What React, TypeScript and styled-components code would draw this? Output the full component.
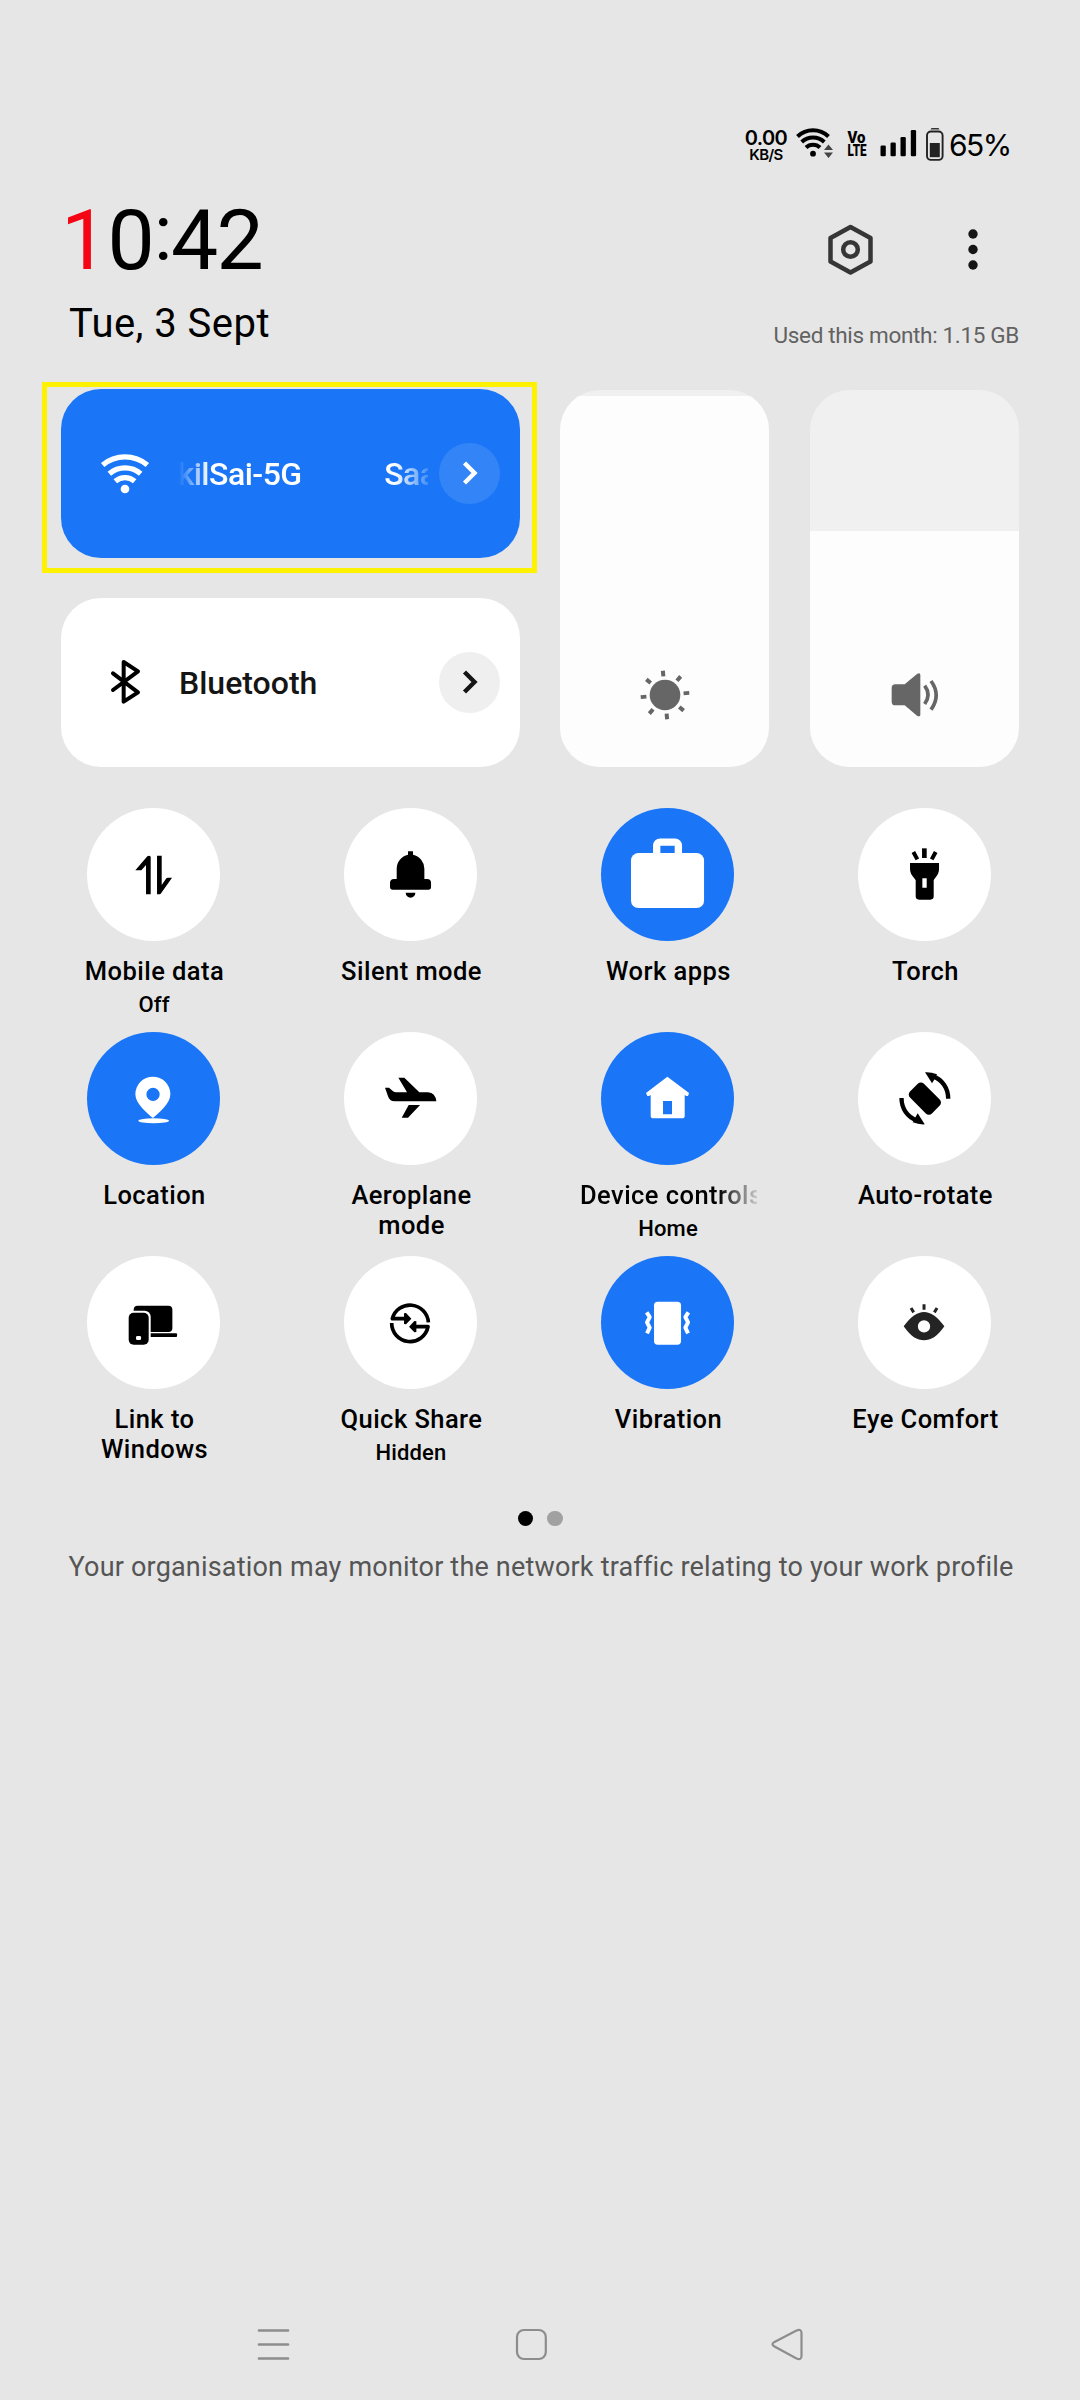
import React from "react";
import styled, { createGlobalStyle, css } from "styled-components";

const BLUE = "#1a76f7";

const GlobalStyle = createGlobalStyle`
  * { box-sizing: border-box; }
  body { margin: 0; background: #e6e6e6; }
`;

const Screen = styled.main`
  width: 1080px;
  height: 2400px;
  display: flex;
  flex-direction: column;
  background: #e6e6e6;
  color: #000;
  font-family: Roboto, "Liberation Sans", sans-serif;
  overflow: hidden;
`;

const Icon = styled.svg`
  display: block;
  flex: none;
`;

/* ---------- status bar ---------- */

const StatusBar = styled.header`
  display: flex;
  justify-content: flex-end;
  height: 166px;
  padding: 122px 70px 0 0;
  font-family: Inter, Roboto, sans-serif;
`;

const Speed = styled.div`
  width: 44px;
  margin-right: 8px;
  padding-top: 6px;
  display: flex;
  flex-direction: column;
  align-items: center;
  font-weight: 600;
  white-space: nowrap;
`;

const SpeedValue = styled.span`
  font-size: 20px;
  line-height: 20px;
  letter-spacing: -0.6px;
`;

const SpeedUnit = styled.span`
  font-size: 15px;
  line-height: 14px;
  letter-spacing: -0.6px;
`;

const StatusIcon = styled(Icon)<{ $gap: number }>`
  margin-right: ${(p) => p.$gap}px;
`;

const BatteryText = styled.span`
  width: 61px;
  padding-top: 5px;
  font-size: 30px;
  line-height: 36px;
  letter-spacing: -1.5px;
  white-space: nowrap;
`;

/* ---------- clock header ---------- */

const Header = styled.section`
  display: flex;
  justify-content: space-between;
  height: 223px;
  padding: 0 61px 0 61px;
`;

const ClockBlock = styled.div`
  padding-top: 33px;
`;

const Clock = styled.div`
  height: 84px;
  font-size: 84px;
  line-height: 84px;
  letter-spacing: -0.7px;
  white-space: nowrap;
`;

const RedDigit = styled.span`
  color: #f50514;
`;

const Colon = styled.span`
  display: inline-block;
  width: 17px;
  font-size: 76px;
  line-height: 60px;
  vertical-align: 10px;
`;

const Minutes = styled.span`
  letter-spacing: -1.8px;
`;

const DateLine = styled.div`
  margin: 17px 0 0 8px;
  font-size: 40px;
  line-height: 48px;
  letter-spacing: 0.45px;
  white-space: nowrap;
`;

const HeaderRight = styled.div`
  display: flex;
  flex-direction: column;
  align-items: flex-end;
`;

const Actions = styled.div`
  display: flex;
  justify-content: space-between;
  width: 192px;
  height: 54px;
  margin: 56px 1.5px 0 0;
`;

const Usage = styled.div`
  margin-top: 45px;
  font-size: 22.5px;
  line-height: 28px;
  letter-spacing: -0.33px;
  font-weight: 430;
  color: #626262;
  white-space: nowrap;
`;

/* ---------- large tiles and sliders ---------- */

const Controls = styled.section`
  display: flex;
  height: 378.5px;
  padding: 0 61px 0 61px;
`;

const WideTiles = styled.div`
  width: 459px;
  margin-right: 40px;
  display: flex;
  flex-direction: column;
  gap: 40.5px;
`;

const WideTile = styled.div<{ $on?: boolean }>`
  position: relative;
  display: flex;
  align-items: center;
  height: 168.5px;
  padding: 0 20px 0 38px;
  border-radius: 40px;
  background: ${(p) => (p.$on ? BLUE : "#fff")};
  color: ${(p) => (p.$on ? "#fff" : "#151515")};
`;

const Highlight = styled.div`
  position: absolute;
  left: -19px;
  top: -7px;
  width: 495px;
  height: 191px;
  border: 5px solid #fff200;
`;

const WideLabel = styled.div<{ $fade?: boolean }>`
  width: 252px;
  margin-left: 28px;
  margin-right: 11px;
  padding-top: 1px;
  display: flex;
  gap: 84px;
  overflow: hidden;
  font-size: 32px;
  line-height: 44px;
  font-weight: 460;
  white-space: nowrap;
  ${(p) =>
    p.$fade &&
    css`
      letter-spacing: -0.5px;
      text-indent: -1.5px;
      mask-image: linear-gradient(to right, transparent 0, #000 30px, #000 216px, transparent 256px);
    `}
`;

const More = styled.div<{ $on?: boolean }>`
  flex: none;
  display: grid;
  place-items: center;
  width: 61px;
  height: 61px;
  border-radius: 50%;
  background: ${(p) => (p.$on ? "rgba(255,255,255,0.11)" : "#efefef")};
`;

const Slider = styled.div`
  width: 208.5px;
  height: 376.5px;
  margin-top: 1px;
  display: flex;
  flex-direction: column;
  justify-content: flex-end;
  border-radius: 40px;
  overflow: hidden;
  background: #f0f0f0;

  & + & {
    margin-left: 41.5px;
  }
`;

const SliderFill = styled.div<{ $height: number }>`
  height: ${(p) => p.$height}px;
  display: flex;
  align-items: flex-end;
  justify-content: center;
  padding: 0 0 45.5px 1px;
  background: #fdfdfd;
  color: #666;
`;

/* ---------- toggle grid ---------- */

const Grid = styled.section`
  display: grid;
  grid-template-columns: repeat(4, 257px);
  grid-auto-rows: 224px;
  margin: 40px 0 0 25px;
  height: 672px;
`;

const Toggle = styled.div`
  display: flex;
  flex-direction: column;
  align-items: center;
`;

const Disc = styled.div<{ $on?: boolean }>`
  width: 133.4px;
  height: 133.4px;
  border-radius: 50%;
  background: ${(p) => (p.$on ? BLUE : "#fff")};
  color: ${(p) => (p.$on ? "#fff" : "#000")};
`;

const Name = styled.div<{ $clip?: boolean }>`
  width: 177px;
  margin: 15px 0 0 2px;
  font-size: 25.5px;
  line-height: 30px;
  font-weight: 460;
  letter-spacing: 0.45px;
  text-align: center;
  ${(p) =>
    p.$clip &&
    css`
      text-align: left;
      white-space: nowrap;
      overflow: hidden;
      mask-image: linear-gradient(to right, #000 138px, transparent 182px);
    `}
`;

const State = styled.div`
  margin: 4.7px 0 0 1px;
  font-size: 22px;
  line-height: 28px;
  font-weight: 460;
  letter-spacing: 0.15px;
`;

/* ---------- footer ---------- */

const Pager = styled.div`
  display: flex;
  justify-content: center;
  gap: 14px;
  margin-top: 31px;
`;

const PageDot = styled.span<{ $active?: boolean }>`
  width: 15.5px;
  height: 15.5px;
  border-radius: 50%;
  background: ${(p) => (p.$active ? "#000" : "#a1a1a1")};
`;

const Notice = styled.p`
  margin: 25px 0 0 2px;
  font-size: 27px;
  line-height: 32px;
  letter-spacing: 0.19px;
  text-align: center;
  color: #555;
  white-space: nowrap;
`;

const NavBar = styled.nav`
  display: flex;
  justify-content: space-between;
  margin-top: auto;
  padding: 0 275px 38px 256px;
`;

/* ---------- glyphs ---------- */

const TileIcon = ({ children }: { children: React.ReactNode }) => (
  <Icon width="133.4" height="133.4" viewBox="0 0 400 400" fill="currentColor">
    {children}
  </Icon>
);

const Chevron = () => (
  <Icon width="20" height="28" viewBox="0 0 20 28" fill="none" stroke="currentColor" strokeWidth="4.4">
    <path d="M4.500 4l10 10-10 10" />
  </Icon>
);

const MobileDataIcon = () => (
  <TileIcon>
    <path d="M145 187l36-42q2-2 5-2t5 3v113h-14v-88l-14 16zM210 143h14v88l14-20q2-2 4-2h13l-34 48q-2 2-5 2h-6z" />
  </TileIcon>
);

const BellIcon = () => (
  <TileIcon>
    <path d="M192 130h15v10a43 43 0 0 1 34 42v31h8q12 0 12 12v12q0 8-8 8H146q-8 0-8-8v-12q0-12 12-12h8v-31a43 43 0 0 1 34-42zM185 254h29a14.5 15 0 0 1-29 0z" />
  </TileIcon>
);

const BriefcaseIcon = () => (
  <TileIcon>
    <rect x="90" y="135" width="219" height="165" rx="22" />
    <rect x="167" y="102.5" width="65" height="50" rx="10" fill="none" stroke="currentColor" strokeWidth="22" />
  </TileIcon>
);

const TorchIcon = () => (
  <TileIcon>
    <path d="M192 121h14v29h-14z" />
    <path d="M166 132l12 22M233 132l-12 22" stroke="currentColor" strokeWidth="12" />
    <path
      fillRule="evenodd"
      d="M156 165h87v18c0 17-12 26-16 34v48q0 10-10 10h-34q-10 0-10-10v-48c-4-8-17-17-17-34zM193 211v28h13v-28z"
    />
  </TileIcon>
);

const PinIcon = () => (
  <TileIcon>
    <path
      fillRule="evenodd"
      d="M197.500 258C180 243 145 214 145 186.500a52.500 52.500 0 0 1 105 0C250 214 215 243 197.500 258zM198 167a20 20 0 1 0 0 40a20 20 0 1 0 0-40z"
    />
    <ellipse cx="200" cy="266" rx="46" ry="7.500" />
  </TileIcon>
);

const PlaneIcon = () => (
  <TileIcon>
    <path d="M123 167h12l12 11q4 3 9 3h33l-26-44h18l45 44h26q22 2 25 27H152q-16 0-20-15zM194 219h34l-36 38h-19z" />
  </TileIcon>
);

const HomeIcon = () => (
  <TileIcon>
    <path
      fillRule="evenodd"
      d="M199 134l65 49-3 9h-5l-5-3v62q0 8-8 8h-86q-8 0-8-8v-62l-5 3h-5l-4-9zM186 207v40h27v-40z"
    />
  </TileIcon>
);

const RotateIcon = () => (
  <TileIcon>
    <rect x="154" y="170" width="93" height="59" rx="13" transform="rotate(45 200.500 199.500)" />
    {[0, 180].map((angle) => (
      <g key={angle} transform={`rotate(${angle} 200.500 199)`}>
        <path d="M270.500 200c0-32-18-58-46-67" fill="none" stroke="currentColor" strokeWidth="13" />
        <path d="M201 121q18-1 36 6l-9 17-6 10z" />
      </g>
    ))}
  </TileIcon>
);

const LinkIcon = () => (
  <TileIcon>
    <rect x="140" y="149" width="116" height="79" rx="12" />
    <path d="M185 232h82q3 0 3 3v5q0 3-3 3h-82z" />
    <rect x="119" y="164" width="72" height="108" rx="18" fill="#fff" />
    <rect x="125" y="170" width="60" height="96" rx="15" />
    <rect x="147" y="240" width="15" height="12" rx="4" fill="#fff" />
  </TileIcon>
);

const QuickShareIcon = () => (
  <TileIcon>
    <g fill="none" stroke="currentColor" strokeWidth="11">
      <path d="M186 188h-41a55 55 0 0 1 108 11" strokeLinejoin="round" />
      <path d="M210 212h42a55 55 0 0 1-109-11" strokeLinejoin="round" />
    </g>
    <path d="M180 172l6-1 16 17-16 17-6-1zM217 196l-6-1-16 17 16 17 6-1z" />
  </TileIcon>
);

const VibrationIcon = () => (
  <TileIcon>
    <rect x="159" y="137" width="81" height="129" rx="11" />
    <g fill="none" stroke="currentColor" strokeWidth="12" strokeLinejoin="round">
      <path d="M137 169l9 14-8 16 8 16-8 17" />
      <path d="M262 169l-9 14 8 16-8 16 8 17" />
    </g>
  </TileIcon>
);

const EyeIcon = () => (
  <TileIcon>
    <g fill="#242424" stroke="#242424">
      <path
        stroke="none"
        fillRule="evenodd"
        d="M137 211C158 182 178 168 198 168S238 182 259 211C238 242 218 253 198 253S158 242 137 211zM198 192.500a18.500 18.500 0 1 0 0 37a18.500 18.500 0 1 0 0-37z"
      />
      <path d="M198 145v16M159 156l8 13M237 156l-8 13" strokeWidth="9" />
    </g>
  </TileIcon>
);

const WifiTileIcon = () => (
  <Icon width="52" height="48" viewBox="0 0 156 144" fill="none" stroke="currentColor" strokeWidth="16">
    <path d="M11 48a104 104 0 0 1 134 0" />
    <path d="M31 74a72 72 0 0 1 94 0" />
    <path d="M49 97a44 44 0 0 1 58 0" />
    <circle cx="78" cy="120" r="13" fill="currentColor" stroke="none" />
  </Icon>
);

const BluetoothIcon = () => (
  <Icon width="52" height="48" viewBox="0 0 156 144" fill="none" stroke="#000" strokeWidth="12" strokeLinejoin="round" strokeLinecap="round">
    <path d="M42 46l75 57-43 28V12l43 28-75 56" />
  </Icon>
);

const SunIcon = () => (
  <Icon width="52" height="52" viewBox="-78 -78 156 156" fill="currentColor">
    <circle r="46" />
    <g transform="rotate(-5)">
      {[0, 45, 90, 135, 180, 225, 270, 315].map((a) => (
        <rect key={a} x="-6" y="-73" width="12" height="17" transform={`rotate(${a})`} />
      ))}
    </g>
  </Icon>
);

const VolumeIcon = () => (
  <Icon width="52" height="52" viewBox="-2 0 156 156" fill="currentColor">
    <path d="M6 57q0-11 11-11h28l37-31q10-5 10 3v119q0 8-10 3l-37-31H17q-11 0-11-11z" />
    <g fill="none" stroke="currentColor" strokeWidth="11">
      <path d="M105 50q20 27 0 55" />
      <path d="M124 36q31 42 0 86" />
    </g>
  </Icon>
);

const toggles = [
  { name: "Mobile data", state: "Off", icon: <MobileDataIcon /> },
  { name: "Silent mode", icon: <BellIcon /> },
  { name: "Work apps", icon: <BriefcaseIcon />, on: true },
  { name: "Torch", icon: <TorchIcon /> },
  { name: "Location", icon: <PinIcon />, on: true },
  { name: "Aeroplane mode", icon: <PlaneIcon /> },
  { name: "Device controls", state: "Home", icon: <HomeIcon />, on: true, clip: true },
  { name: "Auto-rotate", icon: <RotateIcon /> },
  { name: "Link to Windows", icon: <LinkIcon /> },
  { name: "Quick Share", state: "Hidden", icon: <QuickShareIcon /> },
  { name: "Vibration", icon: <VibrationIcon />, on: true },
  { name: "Eye Comfort", icon: <EyeIcon /> },
];

export default function App() {
  return (
    <Screen>
      <GlobalStyle />
      <StatusBar>
        <Speed>
          <SpeedValue>0.00</SpeedValue>
          <SpeedUnit>KB/S</SpeedUnit>
        </Speed>
        <StatusIcon $gap={12} width="38" height="44" viewBox="0 0 38 44">
          <g fill="none" stroke="#000" strokeWidth="4">
            <path d="M1.500 14.500a22.500 22.500 0 0 1 31 0" />
            <path d="M5.700 20a16.500 16.500 0 0 1 22.600 0" />
            <path d="M10 25.500a10 10 0 0 1 14 0" />
          </g>
          <circle cx="17" cy="31.700" r="2.900" />
          <path d="M28 28l4.500-5.500L37 28zM28 30.500h9L32.500 36z" fill="#444" />
        </StatusIcon>
        <StatusIcon $gap={13} width="21" height="44" viewBox="0 0 21 44" fontFamily="Roboto" fontWeight="900">
          <text x="1.500" y="21" fontSize="16.500" textLength="18" lengthAdjust="spacingAndGlyphs">Vo</text>
          <text x="1.500" y="34.300" fontSize="16.500" textLength="19" lengthAdjust="spacingAndGlyphs">LTE</text>
        </StatusIcon>
        <StatusIcon $gap={8} width="37" height="44" viewBox="0 0 37 44">
          <rect x="0.500" y="23.500" width="5.300" height="10.800" rx="1.300" />
          <rect x="10.500" y="20.500" width="5.300" height="13.800" rx="1.300" />
          <rect x="20.500" y="15" width="5.300" height="19.300" rx="1.300" />
          <rect x="30.800" y="8" width="5.300" height="26.300" rx="1.300" />
        </StatusIcon>
        <StatusIcon $gap={4} width="20" height="44" viewBox="0 0 20 44">
          <path d="M5.500 7.500l1-1.500h7l1 1.500z" fill="#333" />
          <rect x="2" y="9.500" width="15.600" height="28.400" rx="4" fill="none" stroke="#222" strokeWidth="1.900" />
          <rect x="4.800" y="21" width="10" height="14.200" fill="#222" />
        </StatusIcon>
        <BatteryText>65%</BatteryText>
      </StatusBar>

      <Header>
        <ClockBlock>
          <Clock>
            <RedDigit>1</RedDigit>0<Colon>:</Colon>
            <Minutes>42</Minutes>
          </Clock>
          <DateLine>Tue, 3 Sept</DateLine>
        </ClockBlock>
        <HeaderRight>
          <Actions>
            <Icon width="50" height="54" viewBox="0 0 50 54" fill="none" stroke="#363636" strokeLinejoin="round">
              <path d="M24.500 5L44.500 16v23.500L24.500 50.500 4.500 39.500V16z" strokeWidth="4.500" />
              <circle cx="24.500" cy="27.500" r="7.300" strokeWidth="4.500" />
            </Icon>
            <Icon width="90" height="54" viewBox="0 0 90 54" fill="#151515">
              <circle cx="45" cy="12" r="4.700" />
              <circle cx="45" cy="27.500" r="4.700" />
              <circle cx="45" cy="43" r="4.700" />
            </Icon>
          </Actions>
          <Usage>Used this month: 1.15 GB</Usage>
        </HeaderRight>
      </Header>

      <Controls>
        <WideTiles>
          <WideTile $on>
            <WifiTileIcon />
            <WideLabel $fade>
              <span>kilSai-5G</span>
              <span>Saa</span>
            </WideLabel>
            <More $on>
              <Chevron />
            </More>
            <Highlight />
          </WideTile>
          <WideTile>
            <BluetoothIcon />
            <WideLabel>Bluetooth</WideLabel>
            <More>
              <Chevron />
            </More>
          </WideTile>
        </WideTiles>
        <Slider>
          <SliderFill $height={371}>
            <SunIcon />
          </SliderFill>
        </Slider>
        <Slider>
          <SliderFill $height={235.5}>
            <VolumeIcon />
          </SliderFill>
        </Slider>
      </Controls>

      <Grid>
        {toggles.map((t) => (
          <Toggle key={t.name}>
            <Disc $on={t.on}>{t.icon}</Disc>
            <Name $clip={t.clip}>{t.name}</Name>
            {t.state && <State>{t.state}</State>}
          </Toggle>
        ))}
      </Grid>

      <Pager>
        <PageDot $active />
        <PageDot />
      </Pager>
      <Notice>Your organisation may monitor the network traffic relating to your work profile</Notice>

      <NavBar>
        <Icon width="36" height="36" viewBox="0 0 36 36" fill="none" stroke="#8d8d8d" strokeWidth="2.700" strokeLinecap="round">
          <path d="M3 4.500h29M3 18.500h29M3 32.500h29" />
        </Icon>
        <Icon width="36" height="36" viewBox="-0.5 0 36 36" fill="none" stroke="#8d8d8d" strokeWidth="2.200">
          <rect x="3.500" y="4" width="28.800" height="29" rx="7" />
        </Icon>
        <Icon width="36" height="36" viewBox="0 0 36 36" fill="none" stroke="#8d8d8d" strokeWidth="2.200">
          <path d="M27.500 4.500q5-2 5 2.500v23q0 4.500-5 2.500L5.500 20.500q-4-2.300 0-4.600z" />
        </Icon>
      </NavBar>
    </Screen>
  );
}
